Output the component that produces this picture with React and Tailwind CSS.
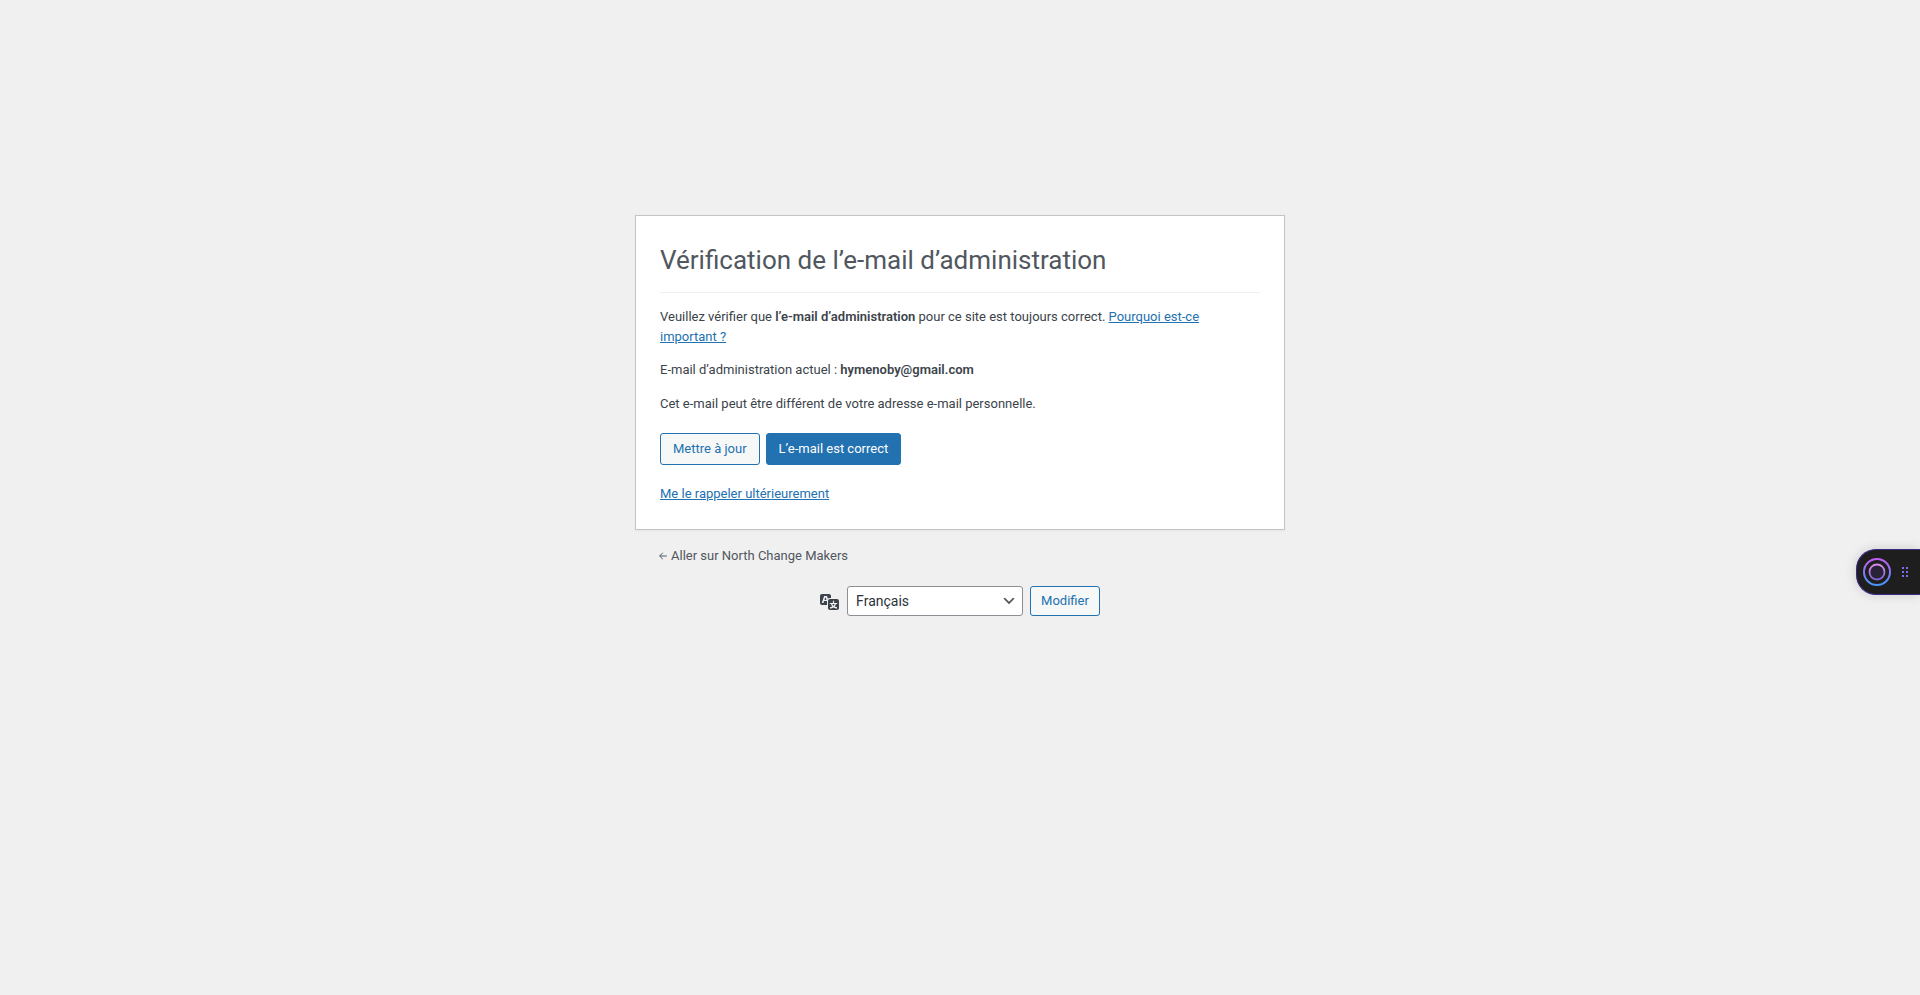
import React from "react";

const link = "text-[#2271b1] underline";
const outlineButton =
  "rounded-[3px] border border-[#2271b1] bg-[#f6f7f7] text-[13px] text-[#2271b1]";

function TranslationIcon() {
  return (
    <svg className="size-5 shrink-0 fill-[#3c434a]" viewBox="0 0 20 20" role="img" aria-label="Langue">
      <path d="M11 7H9.49c-.63 0-1.25.3-1.59.7L7 5H4.13l-2.39 7h1.69l.74-2H7v4H2c-1.1 0-2-.9-2-2V5c0-1.1.9-2 2-2h7c1.1 0 2 .9 2 2v2zM6.51 9H4.49l1-2.93zM10 8h7c1.1 0 2 .9 2 2v7c0 1.1-.9 2-2 2h-7c-1.1 0-2-.9-2-2v-7c0-1.1.9-2 2-2zm7.25 5v-1.08h-3.17V9.75h-1.16v2.17H9.75V13h1.28c.11.85.56 1.85 1.28 2.62-.87.36-1.89.62-2.31.62-.01.02.22.97.2 1.46.84 0 2.21-.5 3.28-1.15 1.09.65 2.48 1.15 3.34 1.15-.02-.49.2-1.44.2-1.46-.43 0-1.49-.27-2.38-.63.7-.77 1.14-1.77 1.25-2.61h1.36zm-3.81 1.93c-.5-.46-.85-1.13-1.01-1.93h2.09c-.17.8-.51 1.47-1 1.93l-.04.03s-.03-.02-.04-.03z" />
    </svg>
  );
}

function AssistantWidget() {
  return (
    <button
      type="button"
      aria-label="Assistant"
      className="fixed top-[549px] right-0 flex h-[46px] w-16 items-center gap-[11px] rounded-l-[20px] border border-r-0 border-[#3b2a86] bg-[#1e1e1e] pl-1.5 shadow-[0_0_12px_rgba(0,0,0,0.15)]"
    >
      <svg className="size-7" viewBox="0 0 28 28" fill="none" aria-hidden="true">
        <defs>
          <linearGradient id="outer" x1="0" y1="0" x2="0" y2="1">
            <stop offset="0" stopColor="#c35cf5" />
            <stop offset="1" stopColor="#4796fb" />
          </linearGradient>
          <linearGradient id="inner" x1="0" y1="0" x2="0" y2="1">
            <stop offset="0" stopColor="#d78be0" />
            <stop offset="1" stopColor="#8067d8" />
          </linearGradient>
        </defs>
        <circle cx="14" cy="14" r="13" stroke="url(#outer)" strokeWidth="2" />
        <circle cx="14" cy="14" r="7.5" fill="#2a2238" stroke="url(#inner)" strokeWidth="1.8" />
      </svg>
      <svg className="h-[10px] w-[6px] fill-[#7c6cf0]" viewBox="0 0 6 10" aria-hidden="true">
        <path d="M0 0h2v2H0zM4 0h2v2H4zM0 4h2v2H0zM4 4h2v2H4zM0 8h2v2H0zM4 8h2v2H4z" />
      </svg>
    </button>
  );
}

export default function App() {
  return (
    <div className="min-h-screen bg-[#f0f0f1] px-4 pt-[215px] pb-6 font-[Roboto,sans-serif] text-[13px] leading-5 text-[#3c434a]">
      <main className="mx-auto max-w-[650px]">
        <form
          onSubmit={(e) => e.preventDefault()}
          className="border border-[#c3c4c7] bg-white px-6 pt-[26px] pb-[25px] shadow-[0_1px_3px_rgba(0,0,0,0.04)]"
        >
          <h1 className="border-b border-[#f0f0f1] pb-[14px] text-[26px] leading-9 text-[#50575e]">
            Vérification de l’e-mail d’administration
          </h1>
          <p className="mt-[14px]">
            Veuillez vérifier que <strong className="font-semibold">l’e-mail d’administration</strong> pour
            ce site est toujours correct.{" "}
            <a href="#why" className={link}>
              Pourquoi est-ce important&nbsp;?
            </a>
          </p>
          <p className="mt-[13px]">
            E-mail d’administration actuel&nbsp;: <strong className="font-semibold">hymenoby@gmail.com</strong>
          </p>
          <p className="mt-[14px]">Cet e-mail peut être différent de votre adresse e-mail personnelle.</p>
          <div className="mt-[19px] flex gap-1.5">
            <button type="button" className={`${outlineButton} h-8 px-3`}>
              Mettre à jour
            </button>
            <button
              type="submit"
              className="h-8 rounded-[3px] border border-[#2271b1] bg-[#2271b1] px-3 text-[13px] text-white"
            >
              L’e-mail est correct
            </button>
          </div>
          <p className="mt-[19px]">
            <a href="#later" className={link}>
              Me le rappeler ultérieurement
            </a>
          </p>
        </form>
        <p className="mt-4 px-6">
          <a href="#site" className="inline-flex items-center gap-1 text-[#50575e]">
            <svg className="size-2" viewBox="0 0 8 8" fill="none" stroke="currentColor" aria-hidden="true">
              <path d="M7.8 4H.8M3.8.8L.6 4l3.2 3.2" />
            </svg>
            Aller sur North Change Makers
          </a>
        </p>
        <form onSubmit={(e) => e.preventDefault()} className="mt-5 flex items-center justify-center">
          <label htmlFor="locale" className="mr-[7px]">
            <TranslationIcon />
          </label>
          <div className="mr-[7px] grid w-44 items-center">
            <select
              id="locale"
              defaultValue="fr"
              className="col-start-1 row-start-1 h-[30px] w-full appearance-none rounded-[3px] border border-[#8c8f94] bg-white pr-6 pl-2 text-sm text-[#2c3338]"
            >
              <option value="fr">Français</option>
              <option value="en">English</option>
            </select>
            <svg
              className="pointer-events-none col-start-1 row-start-1 mr-1.5 size-4 justify-self-end fill-[#555]"
              viewBox="0 0 20 20"
              aria-hidden="true"
            >
              <path d="M5 6l5 5 5-5 2 1-7 7-7-7 2-1z" />
            </svg>
          </div>
          <button type="submit" className={`${outlineButton} h-[30px] px-2.5`}>
            Modifier
          </button>
        </form>
      </main>
      <AssistantWidget />
    </div>
  );
}
